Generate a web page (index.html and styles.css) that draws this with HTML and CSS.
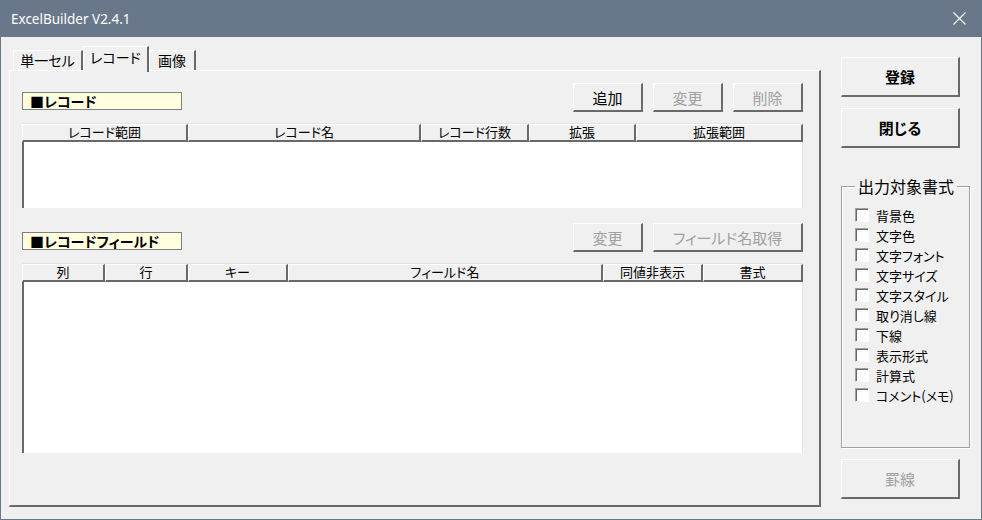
FILE: index.html
```html
<!DOCTYPE html>
<html lang="ja">
<head>
  <meta charset="UTF-8">
  <title>ExcelBuilder V2.4.1</title>
  <link rel="stylesheet" href="styles.css">
</head>
<body>
  <div class="window">
    <div class="titlebar">
      <span class="title">ExcelBuilder V2.4.1</span>
      <svg class="close" width="13" height="13" viewBox="0 0 13 13">
        <path d="M0.5 0.5 L12.5 12.5 M12.5 0.5 L0.5 12.5" stroke="#fff" stroke-width="1.1" fill="none"/>
      </svg>
    </div>

    <div class="content">
      <div class="tabs">
        <div class="tab-strip">
          <div class="tab">単一セル</div>
          <div class="tab active">レコード</div>
          <div class="tab">画像</div>
        </div>

        <div class="panel">
          <div class="section-row first">
            <div class="caption">■レコード</div>
            <div class="btn-group">
              <button class="btn">追加</button>
              <button class="btn" disabled>変更</button>
              <button class="btn" disabled>削除</button>
            </div>
          </div>
          <div class="list">
            <div class="list-head">
              <div class="col" style="width:166px">レコード範囲</div>
              <div class="col" style="width:233px">レコード名</div>
              <div class="col" style="width:108px">レコード行数</div>
              <div class="col" style="width:107px">拡張</div>
              <div class="col" style="width:167px">拡張範囲</div>
            </div>
            <div class="list-body short"></div>
          </div>

          <div class="section-row second">
            <div class="caption">■レコードフィールド</div>
            <div class="btn-group">
              <button class="btn" disabled>変更</button>
              <button class="btn wide" disabled>フィールド名取得</button>
            </div>
          </div>
          <div class="list">
            <div class="list-head">
              <div class="col" style="width:83px">列</div>
              <div class="col" style="width:83px">行</div>
              <div class="col" style="width:100px">キー</div>
              <div class="col" style="width:315px">フィールド名</div>
              <div class="col" style="width:100px">同値非表示</div>
              <div class="col" style="width:100px">書式</div>
            </div>
            <div class="list-body tall"></div>
          </div>
        </div>
      </div>

      <div class="side">
        <button class="btn big">登録</button>
        <button class="btn big">閉じる</button>

        <fieldset class="group">
          <legend>出力対象書式</legend>
          <label class="check"><span class="box"></span>背景色</label>
          <label class="check"><span class="box"></span>文字色</label>
          <label class="check"><span class="box"></span>文字フォント</label>
          <label class="check"><span class="box"></span>文字サイズ</label>
          <label class="check"><span class="box"></span>文字スタイル</label>
          <label class="check"><span class="box"></span>取り消し線</label>
          <label class="check"><span class="box"></span>下線</label>
          <label class="check"><span class="box"></span>表示形式</label>
          <label class="check"><span class="box"></span>計算式</label>
          <label class="check"><span class="box"></span>コメント(メモ)</label>
        </fieldset>

        <button class="btn big" disabled>罫線</button>
      </div>
    </div>
  </div>
</body>
</html>
```

FILE: styles.css
```css
* {
  box-sizing: border-box;
}
body {
  margin: 0;
  font-family: "Noto Sans CJK JP", "Noto Sans", sans-serif;
  font-feature-settings: "palt";
  color: #000;
}
.window {
  width: 982px;
  height: 520px;
  background-color: #f0f0f0;
  border: 1px solid #687789;
  border-top: none;
  overflow: hidden;
}
.titlebar {
  height: 37px;
  margin: 0 -1px;
  background-color: #687789;
  color: #fff;
  display: flex;
  align-items: center;
  justify-content: space-between;
  padding: 0 16px 0 11px;
}
.title {
  font-family: "Noto Sans", sans-serif;
  font-size: 13.5px;
  font-feature-settings: normal;
}
.close {
  display: block;
}
.content {
  display: flex;
  padding: 9px 0 0 8px;
  gap: 20px;
}
.tabs {
  width: 812px;
}
.tab-strip {
  display: flex;
  align-items: flex-end;
  height: 24px;
  padding-left: 4px;
}
.tab {
  height: 20px;
  padding: 0;
  font-size: 14px;
  line-height: 18px;
  white-space: nowrap;
  border-top: 1px solid #fff;
  border-left: 1px solid #fff;
  border-right: 2px solid #696969;
  text-align: center;
}
.tab:first-child {
  width: 70px;
}
.tab.active {
  width: 66px;
  height: 26px;
  margin-bottom: -2px;
  position: relative;
  z-index: 1;
  background-color: #f0f0f0;
  line-height: 20px;
}
.tab:last-child {
  width: 47px;
}
.panel {
  height: 437px;
  border-top: 1px solid #fff;
  border-left: 1px solid #fff;
  border-right: 2px solid #696969;
  border-bottom: 2px solid #696969;
  padding: 0 16px 0 12px;
}
.section-row {
  display: flex;
  justify-content: space-between;
  align-items: flex-end;
}
.section-row.first {
  margin-top: 12px;
}
.section-row.second {
  margin-top: 15px;
}
.caption {
  width: 160px;
  height: 18px;
  margin-bottom: 2px;
  background-color: #ffffe0;
  border: 1px solid #808080;
  font-size: 14px;
  font-weight: bold;
  line-height: 16px;
  padding-left: 7px;
}
.btn-group {
  display: flex;
  gap: 10px;
}
.btn {
  width: 70px;
  height: 29px;
  padding: 0;
  background-color: #f0f0f0;
  border-top: 1px solid #fff;
  border-left: 1px solid #fff;
  border-right: 2px solid #696969;
  border-bottom: 2px solid #696969;
  font-family: inherit;
  font-feature-settings: "palt";
  font-size: 15px;
  color: #000;
}
.btn:disabled {
  color: #a0a0a0;
}
.btn.wide {
  width: 150px;
}
.list {
  margin-top: 11px;
  width: 781px;
}
.list-head {
  display: flex;
  height: 19px;
  border-top: 1px solid #e3e3e3;
}
.col {
  height: 18px;
  border-top: 1px solid #fff;
  border-left: 1px solid #fff;
  border-right: 2px solid #696969;
  border-bottom: 2px solid #696969;
  font-size: 13px;
  line-height: 14px;
  text-align: center;
  background-color: #f0f0f0;
}
.list-body {
  background-color: #fff;
  border-left: 2px solid #696969;
  border-right: 1px solid #e3e3e3;
}
.list-body.short {
  height: 66px;
}
.list-body.tall {
  height: 171px;
}
.side {
  width: 129px;
  padding-top: 11px;
  display: flex;
  flex-direction: column;
}
.btn.big {
  width: 119px;
  height: 40px;
  font-size: 15px;
  font-weight: bold;
}
.btn.big + .btn.big {
  margin-top: 11px;
}
.btn.big:disabled {
  font-weight: normal;
}
.group {
  margin: 29px 0 0 0;
  height: 271px;
  padding: 10px 0 0 13px;
  border: 1px solid #a0a0a0;
  box-shadow: 1px 1px 0 #fff, inset 1px 1px 0 #fff;
  display: flex;
  flex-direction: column;
}
.group legend {
  font-size: 16px;
  line-height: 18px;
  padding: 0 3px;
}
.check {
  display: flex;
  align-items: center;
  height: 20px;
  font-size: 13px;
  gap: 7px;
}
.box {
  width: 14px;
  height: 14px;
  background-color: #fff;
  border-top: 1px solid #a0a0a0;
  border-left: 1px solid #a0a0a0;
  border-right: 1px solid #fff;
  border-bottom: 1px solid #fff;
  box-shadow: inset 1px 1px 0 #696969;
}
.group + .btn.big {
  margin-top: 11px;
}
```
